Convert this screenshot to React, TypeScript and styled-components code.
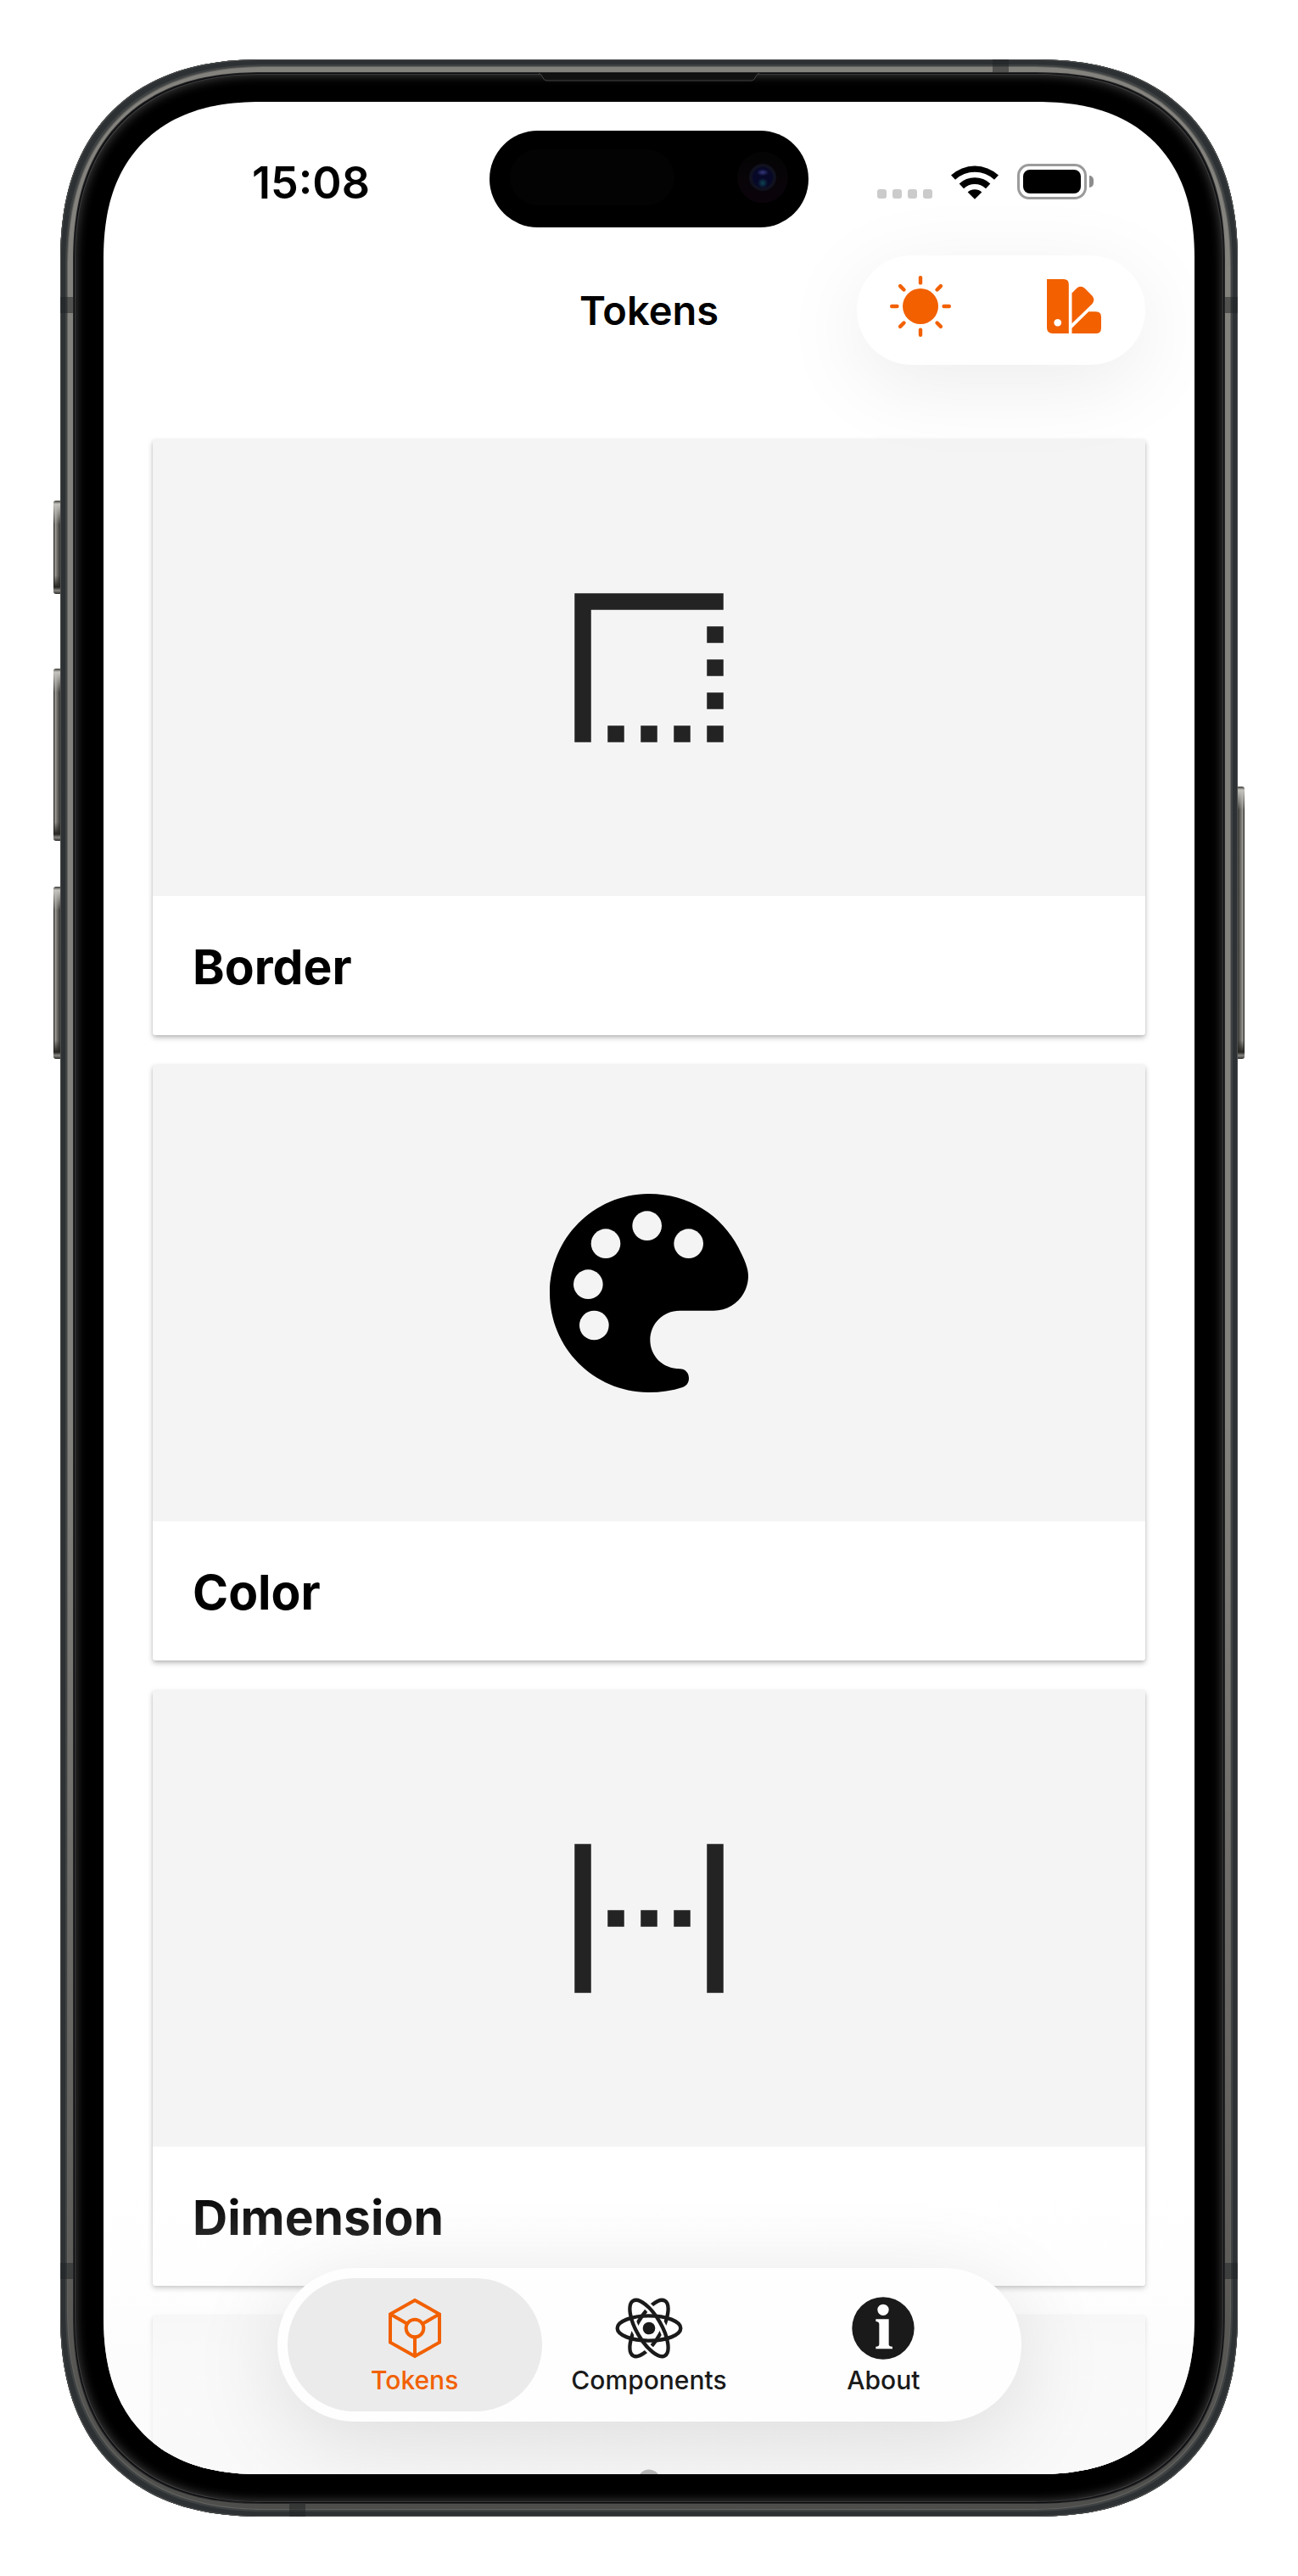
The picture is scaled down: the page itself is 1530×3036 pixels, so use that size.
import React from 'react';
import styled, { createGlobalStyle, css } from 'styled-components';

const ORANGE = '#f26000';
const INK = '#1a1a1a';

const GlobalStyle = createGlobalStyle`
  *, *::before, *::after { box-sizing: border-box; }
  body {
    margin: 0;
    background: #ffffff;
    font-family: Inter, "Liberation Sans", sans-serif;
    color: #000000;
  }
  a { color: inherit; text-decoration: none; }
  button { border: 0; background: none; padding: 0; margin: 0; font: inherit; color: inherit; cursor: pointer; }
  h1, h2 { margin: 0; }
  svg { display: block; }
`;

const squircle = css<{ $r: number; $soft: number }>`
  border-radius: ${(p) => p.$r}px;
  @supports (corner-shape: superellipse(1.24)) {
    border-radius: ${(p) => p.$soft}px;
    corner-shape: superellipse(1.24);
  }
`;

const Page = styled.div`
  min-height: 100vh;
  padding: 70px 71px;
`;

const Chassis = styled.div<{ $r: number; $soft: number }>`
  ${squircle}
  position: relative;
  padding: 16px;
  background: linear-gradient(#84827d 0%, #84827d 55%, #5d5c59 90%, #4d4d4b 100%);
  box-shadow:
    inset 0 0 0 1px #4c4e4e,
    inset 0 0 0 6px #2d3133,
    inset 0 0 0 8px #3f4243,
    inset 0 0 0 9px #62625f;
`;

const Bezel = styled.div<{ $r: number; $soft: number }>`
  ${squircle}
  position: relative;
  padding: 34px 35px;
  background: #000000;
  box-shadow:
    0 0 0 1px #2a2a2b,
    inset 0 0 0 1px #08090c,
    inset 0 0 0 2px #3a3a3b,
    inset 0 0 12px 3px #3c3c3c;
`;

const Screen = styled.div<{ $r: number; $soft: number }>`
  ${squircle}
  position: relative;
  height: calc(100vh - 240px);
  min-height: 1000px;
  overflow: hidden;
  background: #ffffff;
`;

/* Hardware details that sit on the rim of the phone */
const SideKey = styled.span<{ $side: 'left' | 'right'; $top: number; $size: number }>`
  position: absolute;
  top: ${(p) => p.$top}px;
  ${(p) => p.$side}: -8px;
  width: 8px;
  height: ${(p) => p.$size}px;
  border-radius: ${(p) => (p.$side === 'left' ? '3px 0 0 3px' : '0 3px 3px 0')};
  background:
    linear-gradient(#3a3936 0, #c5c3bd 4px, transparent 28px, transparent calc(100% - 22px), #262522 calc(100% - 8px), #8a8883 calc(100% - 4px), #2a2927 100%),
    linear-gradient(${(p) => (p.$side === 'left' ? '90deg' : '270deg')}, #3a3936 0 1px, #aaa8a2 2px, #8b8983 3px, #55534f 6px, #3a3936 8px);
`;

const Antenna = styled.span<{ $edge: 'left' | 'right' | 'top' | 'bottom'; $at: 'start' | 'end' }>`
  position: absolute;
  background: #1e212480;
  ${(p) =>
    p.$edge === 'left' || p.$edge === 'right'
      ? css`
          ${p.$edge}: 0;
          ${p.$at === 'start' ? 'top' : 'bottom'}: 280px;
          width: 16px;
          height: 19px;
        `
      : css`
          ${p.$edge}: 0;
          ${p.$at === 'start' ? 'left' : 'right'}: 270px;
          width: 19px;
          height: 15px;
        `}
`;

const Earpiece = styled.svg`
  position: absolute;
  top: 0;
  left: 50%;
  width: 260px;
  height: 10px;
  margin-left: -130px;
`;

const StatusBar = styled.div`
  display: grid;
  grid-template-columns: 1fr 376px 1fr;
  padding-top: 34px;
`;

const StatusSide = styled.div<{ $side: 'left' | 'right' }>`
  display: flex;
  align-items: center;
  justify-content: center;
  gap: 22px;
  padding-top: 6px;
  padding-${(p) => p.$side}: ${(p) => (p.$side === 'left' ? 34 : 38)}px;
`;

const Clock = styled.time`
  padding-top: 4px;
  font-size: 52px;
  line-height: 60px;
  font-weight: 600;
`;

const Island = styled.div`
  display: flex;
  align-items: center;
  justify-content: space-between;
  height: 114px;
  padding: 0 24px 4px;
  border-radius: 57px;
  background: #000000;
`;

const Sensor = styled.span`
  width: 194px;
  height: 66px;
  border-radius: 33px;
  background: #030303;
`;

const Camera = styled.span`
  display: grid;
  place-items: center;
  width: 60px;
  height: 60px;
  border-radius: 50%;
  background: linear-gradient(#040404, #0b040b);
`;

const Lens = styled.span`
  width: 32px;
  height: 32px;
  border: 4px solid #10111f;
  border-radius: 50%;
  background:
    radial-gradient(ellipse 7px 4px at 50% 26%, #35397c, transparent),
    radial-gradient(circle 6px at 50% 78%, #0d4552, transparent),
    #070828;
`;

const Signal = styled.span`
  display: flex;
  gap: 7px;
  align-self: center;
  padding-top: 29px;
`;

const SignalDot = styled.i`
  width: 11px;
  height: 11px;
  border-radius: 3px;
  background: #cbcbcb;
`;

const Battery = styled.span`
  display: flex;
  align-items: center;
  gap: 3px;
`;

const BatteryShell = styled.span`
  width: 82px;
  height: 42px;
  padding: 4px;
  border: 3px solid #9b9b9b;
  border-radius: 14px;
`;

const BatteryCharge = styled.span`
  display: block;
  height: 28px;
  border-radius: 8px;
  background: #000000;
`;

const BatteryTip = styled.span`
  width: 5px;
  height: 14px;
  border-radius: 0 5px 5px 0;
  background: #8c8c8c;
`;

const Header = styled.header`
  position: relative;
  display: grid;
  grid-template-columns: 1fr auto 1fr;
  align-items: center;
  padding: 33px 58px 88px;
`;

const Title = styled.h1`
  grid-column: 2;
  font-size: 47px;
  line-height: 58px;
  font-weight: 600;
`;

const Actions = styled.div`
  justify-self: end;
  display: grid;
  grid-template-columns: 1fr 1fr;
  width: 340px;
  height: 129px;
  padding: 0 0 9px;
  border-radius: 65px;
  background: #ffffff;
  color: ${ORANGE};
  box-shadow: 0 22px 100px rgba(0, 0, 0, 0.08);
`;

const Action = styled.button<{ $align: 'start' | 'end' }>`
  display: flex;
  align-items: center;
  justify-content: flex-${(p) => p.$align};
  padding: 0 ${(p) => (p.$align === 'end' ? 52 : 38)}px;
`;

const CardList = styled.main`
  display: flex;
  flex-direction: column;
  gap: 35px;
  padding: 0 58px;
`;

const Card = styled.a`
  display: block;
  border-radius: 3px;
  background: #ffffff;
  box-shadow: 0 3px 6px rgba(0, 0, 0, 0.26), 0 1px 3px rgba(0, 0, 0, 0.08);
`;

const CardArt = styled.div`
  display: grid;
  place-items: center;
  height: 538px;
  background: #f4f4f4;
`;

const CardTitle = styled.h2`
  padding: 50px 47px 46px;
  font-size: 57px;
  line-height: 68px;
  font-weight: 700;
`;

const BottomFade = styled.div`
  position: absolute;
  inset: auto 0 0;
  height: 340px;
  pointer-events: none;
  background: linear-gradient(rgba(251, 251, 251, 0), rgba(251, 251, 251, 0.3) 35%, rgba(251, 251, 251, 0.75) 60%);
`;

const TabBar = styled.nav`
  position: absolute;
  inset: auto 0 62px;
  display: flex;
  width: 877px;
  max-width: calc(100% - 48px);
  margin: 0 auto;
  padding: 12px;
  border-radius: 91px;
  background: #fefefe;
  box-shadow: 0 22px 110px rgba(0, 0, 0, 0.12);
`;

const Tab = styled.button<{ $active?: boolean }>`
  flex: 1;
  display: flex;
  flex-direction: column;
  align-items: center;
  gap: 6px;
  height: 157px;
  padding-top: 22px;
  border-radius: 79px;
  background: ${(p) => (p.$active ? '#ebebeb' : 'transparent')};
  color: ${(p) => (p.$active ? ORANGE : INK)};
  font-size: 30px;
  line-height: 36px;
  font-weight: 500;
  & + & {
    margin-left: -24px;
  }
`;

const BorderIcon = () => (
  <svg width="234" height="234" viewBox="0 0 24 24" fill="#232323" aria-hidden="true">
    <path d="M3 3h18v2H5v16H3zM19 7h2v2h-2zM19 11h2v2h-2zM19 15h2v2h-2zM19 19h2v2h-2zM15 19h2v2h-2zM11 19h2v2h-2zM7 19h2v2H7z" />
  </svg>
);

const PaletteIcon = () => (
  <svg width="234" height="234" viewBox="0 0 702 702" aria-hidden="true">
    <path d="M351 0C492 0 608 76 667 190C690 235 702 264 702 290C702 358 648 413 580 413H460C400 413 355 460 355 517C355 574 400 619 460 619C479 619 492 633 492 652C492 668 484 679 470 684C433 696 392 702 351 702C157 702 0 545 0 351C0 157 157 0 351 0Z" />
    <g fill="#f4f4f4">
      <circle cx="344" cy="113" r="52" />
      <circle cx="198" cy="176" r="52" />
      <circle cx="491" cy="176" r="52" />
      <circle cx="136" cy="320" r="52" />
      <circle cx="157" cy="465" r="52" />
    </g>
  </svg>
);

const DimensionIcon = () => (
  <svg width="234" height="234" viewBox="0 0 24 24" fill="#232323" aria-hidden="true">
    <path d="M3 3h2v18H3zM19 3h2v18h-2zM7 11h2v2H7zM11 11h2v2h-2zM15 11h2v2h-2z" />
  </svg>
);

const ElevationIcon = () => (
  <svg width="176" height="176" viewBox="0 0 176 176" fill="#000000" aria-hidden="true">
    <path d="M80 3Q88 -2 96 3L170 80Q176 88 170 96L96 172Q88 178 80 172L6 96Q0 88 6 80Z" />
  </svg>
);

const SunIcon = () => (
  <svg width="74" height="74" viewBox="-37 -37 74 74" fill="none" stroke="currentColor" strokeWidth="4.4" strokeLinecap="round" aria-hidden="true">
    <circle r="21" fill="currentColor" stroke="none" />
    {[0, 45, 90, 135, 180, 225, 270, 315].map((a) => (
      <path key={a} d="M0 -27.6V-33.8" transform={`rotate(${a})`} />
    ))}
  </svg>
);

const SwatchIcon = () => (
  <svg width="64" height="64" viewBox="0 0 191 191" fill="currentColor" aria-hidden="true">
    <path fillRule="evenodd" d="M0 0H59Q77 0 77 18V191H20Q0 191 0 171ZM38 140a13 13 0 1 0 0.1 0Z" />
    <path d="M88 49L104 33Q119 19 134 33L159 58Q171 72 159 87L88 156Z" />
    <path d="M88 191V172L147 114H172Q191 114 191 133V172Q191 191 172 191Z" />
  </svg>
);

const WifiIcon = () => (
  <svg width="56" height="41" viewBox="0 0 168 122" aria-hidden="true">
    <path d="M0 37A124 124 0 0 1 168 37L153 53A101 101 0 0 0 15 53Z" />
    <path d="M29 67A80 80 0 0 1 139 67L123 84A57 57 0 0 0 45 84Z" />
    <path d="M59 97A37 37 0 0 1 109 97L84 122Z" />
  </svg>
);

const TokenIcon = () => (
  <svg width="74" height="74" viewBox="-111 -111 222 222" fill="none" stroke="currentColor" strokeWidth="12" aria-hidden="true">
    <path d="M0 -99L87 -50V50L0 99L-87 50V-50Z" />
    <circle r="31" />
    <path d="M-87 -50L-27 -16M87 -50L27 -16M0 31V99" />
  </svg>
);

const AtomIcon = () => (
  <svg width="80" height="74" viewBox="-120 -111 240 222" fill="none" aria-hidden="true">
    <g stroke="currentColor" strokeWidth="13">
      <ellipse rx="112" ry="44" transform="rotate(-60)" />
      <ellipse rx="112" ry="44" transform="rotate(60)" stroke="#fefefe" strokeWidth="29" />
      <ellipse rx="112" ry="44" />
      <ellipse rx="112" ry="44" transform="rotate(60)" />
    </g>
    <circle r="22" fill="currentColor" />
  </svg>
);

const InfoIcon = () => (
  <svg width="74" height="74" viewBox="-111 -111 222 222" aria-hidden="true">
    <circle r="110" fill="currentColor" />
    <g fill="#fefefe">
      <circle cy="-65" r="20" />
      <path d="M-26 -32H20V58Q20 65 33 65V73H-26V65Q-14 65 -14 56V-14Q-14 -23 -26 -24Z" />
    </g>
  </svg>
);

const cards = [
  { title: 'Border', Icon: BorderIcon },
  { title: 'Color', Icon: PaletteIcon },
  { title: 'Dimension', Icon: DimensionIcon },
  { title: '', Icon: ElevationIcon },
];

const tabs = [
  { title: 'Tokens', Icon: TokenIcon },
  { title: 'Components', Icon: AtomIcon },
  { title: 'About', Icon: InfoIcon },
];

export default function App() {
  const [active, setActive] = React.useState('Tokens');
  return (
    <Page>
      <GlobalStyle />
      <Chassis $r={210} $soft={240}>
        <SideKey $side="left" $top={520} $size={110} />
        <SideKey $side="left" $top={718} $size={203} />
        <SideKey $side="left" $top={975} $size={203} />
        <SideKey $side="right" $top={857} $size={321} />
        <Antenna $edge="left" $at="start" />
        <Antenna $edge="right" $at="start" />
        <Antenna $edge="left" $at="end" />
        <Antenna $edge="right" $at="end" />
        <Antenna $edge="top" $at="end" />
        <Antenna $edge="bottom" $at="start" />
        <Bezel $r={194} $soft={223}>
          <Earpiece viewBox="0 0 260 10">
            <path d="M0 0.5Q3 1 4 4Q6 9 9 9H251Q254 9 256 4Q257 1 260 0.5" fill="#111111" stroke="#454545" />
          </Earpiece>
          <Screen $r={158} $soft={186}>
            <StatusBar>
              <StatusSide $side="left">
                <Clock>15:08</Clock>
              </StatusSide>
              <Island>
                <Sensor />
                <Camera>
                  <Lens />
                </Camera>
              </Island>
              <StatusSide $side="right">
                <Signal>
                  <SignalDot />
                  <SignalDot />
                  <SignalDot />
                  <SignalDot />
                </Signal>
                <WifiIcon />
                <Battery>
                  <BatteryShell>
                    <BatteryCharge />
                  </BatteryShell>
                  <BatteryTip />
                </Battery>
              </StatusSide>
            </StatusBar>
            <Header>
              <Title>Tokens</Title>
              <Actions>
                <Action $align="start" aria-label="Light appearance">
                  <SunIcon />
                </Action>
                <Action $align="end" aria-label="Theme colors">
                  <SwatchIcon />
                </Action>
              </Actions>
            </Header>
            <CardList>
              {cards.map(({ title, Icon }) => (
                <Card key={title} href="#">
                  <CardArt>
                    <Icon />
                  </CardArt>
                  {title && <CardTitle>{title}</CardTitle>}
                </Card>
              ))}
            </CardList>
            <BottomFade />
            <TabBar>
              {tabs.map(({ title, Icon }) => (
                <Tab key={title} $active={title === active} onClick={() => setActive(title)}>
                  <Icon />
                  {title}
                </Tab>
              ))}
            </TabBar>
          </Screen>
        </Bezel>
      </Chassis>
    </Page>
  );
}
